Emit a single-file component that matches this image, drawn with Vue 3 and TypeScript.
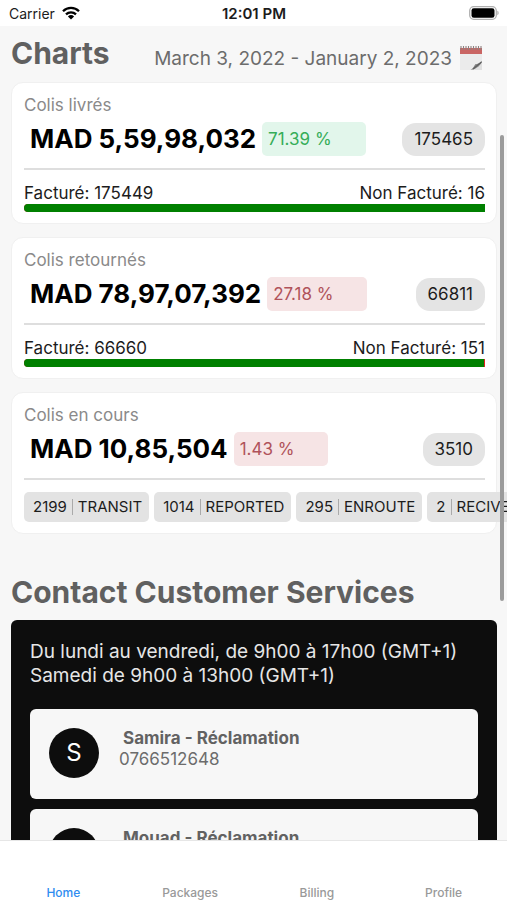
<script setup lang="ts">
import { ref } from 'vue'

interface Tag {
  count: number
  name: string
}

interface Summary {
  title: string
  amount: string
  rate: string
  trend: 'up' | 'down'
  total: number
  billed?: number
  unbilled?: number
  tags?: Tag[]
}

interface Contact {
  name: string
  phone: string
}

const summaries: Summary[] = [
  { title: 'Colis livrés', amount: 'MAD 5,59,98,032', rate: '71.39 %', trend: 'up', total: 175465, billed: 175449, unbilled: 16 },
  { title: 'Colis retournés', amount: 'MAD 78,97,07,392', rate: '27.18 %', trend: 'down', total: 66811, billed: 66660, unbilled: 151 },
  {
    title: 'Colis en cours',
    amount: 'MAD 10,85,504',
    rate: '1.43 %',
    trend: 'down',
    total: 3510,
    tags: [
      { count: 2199, name: 'TRANSIT' },
      { count: 1014, name: 'REPORTED' },
      { count: 295, name: 'ENROUTE' },
      { count: 2, name: 'RECIVED' },
    ],
  },
]

const contacts: Contact[] = [
  { name: 'Samira - Réclamation', phone: '0766512648' },
  { name: 'Mouad - Réclamation', phone: '' },
]

const tabs = ['Home', 'Packages', 'Billing', 'Profile']
const activeTab = ref('Home')

const billedShare = (s: Summary): string => `${((s.billed ?? 0) / s.total) * 100}%`
</script>

<template>
  <div class="screen">
    <header class="status">
      <div class="carrier">
        <span>Carrier</span>
        <svg width="18" height="14" viewBox="0 0 18 14" aria-hidden="true">
          <g fill="none" stroke="#000" stroke-width="2.3">
            <path d="M1 5.2a11.4 11.4 0 0 1 16 0" />
            <path d="M4 8.3a7.2 7.2 0 0 1 10 0" />
          </g>
          <path d="M9 13.6 5.9 10.4a4.5 4.5 0 0 1 6.2 0z" />
        </svg>
      </div>
      <time class="clock">12:01 PM</time>
      <div class="battery">
        <svg width="30" height="14" viewBox="0 0 30 14" aria-hidden="true">
          <rect x=".7" y=".7" width="26.6" height="12.6" rx="4" fill="#fff" stroke="#b0b0b0" stroke-width="1.3" />
          <rect x="2.5" y="2.3" width="23" height="9.4" rx="2.3" />
          <path d="M28.4 4.8c1.6.6 1.6 3.8 0 4.4z" fill="#a8a8a8" />
        </svg>
      </div>
    </header>

    <main class="content">
      <div class="heading">
        <h1>Charts</h1>
        <button class="range" type="button">
          <span>March 3, 2022 - January 2, 2023</span>
          <svg width="24" height="26" viewBox="0 0 24 26" aria-hidden="true">
            <path d="M1 4h22v21H1z" fill="#ebebeb" />
            <path d="M1 3h22v6H1z" fill="#c96563" />
            <path d="M2 1v4M4.5 1v4M7 1v4M9.5 1v4M12 1v4M14.5 1v4M17 1v4M19.5 1v4M22 1v4" stroke="#8f8080" stroke-width="1.1" />
            <path d="M12 25 23 17v8z" fill="#e0e0e0" />
            <path d="M11.500 25c2-1.200 3.500-3.200 4.700-5.800 2.400 0 4.900-1.200 6.800-3.400-.6 3.800-4.700 8.200-11.500 9.200z" fill="#858585" />
            <path d="M14 24 22.500 17" stroke="#5e5e5e" stroke-width="1.200" />
          </svg>
        </button>
      </div>

      <section class="cards">
        <article v-for="s in summaries" :key="s.title" class="card">
          <h2 class="title">{{ s.title }}</h2>
          <div class="figures">
            <strong class="amount">{{ s.amount }}</strong>
            <span class="rate" :class="s.trend">{{ s.rate }}</span>
            <span class="total">{{ s.total }}</span>
          </div>
          <hr />
          <template v-if="s.billed !== undefined">
            <div class="split">
              <span>Facturé: {{ s.billed }}</span>
              <span>Non Facturé: {{ s.unbilled }}</span>
            </div>
            <div class="bar">
              <div class="fill" :style="{ width: billedShare(s) }"></div>
            </div>
          </template>
          <ul v-else class="tags">
            <li v-for="t in s.tags" :key="t.name" class="tag">
              <span>{{ t.count }}</span>
              <span class="name">{{ t.name }}</span>
            </li>
          </ul>
        </article>
      </section>

      <h2 class="section-title">Contact Customer Services</h2>
      <section class="support">
        <p>Du lundi au vendredi, de 9h00 à 17h00 (GMT+1)<br />Samedi de 9h00 à 13h00 (GMT+1)</p>
        <article v-for="c in contacts" :key="c.name" class="contact">
          <span class="avatar">{{ c.name[0] }}</span>
          <div class="details">
            <h3>{{ c.name }}</h3>
            <span>{{ c.phone }}</span>
          </div>
        </article>
      </section>
      <div class="scrollbar"></div>
    </main>

    <nav class="tabbar">
      <button
        v-for="t in tabs"
        :key="t"
        type="button"
        :class="{ active: t === activeTab }"
        @click="activeTab = t"
      >
        {{ t }}
      </button>
    </nav>
  </div>
</template>

<style>
body {
  margin: 0;
}
</style>

<style scoped>
.screen {
  display: flex;
  flex-direction: column;
  height: 100vh;
  background: #f7f7f7;
  color: #1c1c1c;
  font-family: Inter, 'Liberation Sans', sans-serif;
}

h1,
h2,
h3,
p,
ul {
  margin: 0;
  padding: 0;
}

button {
  border: 0;
  background: none;
  padding: 0;
  font-family: inherit;
}

.status {
  display: grid;
  grid-template-columns: 1fr auto 1fr;
  align-items: center;
  height: 26px;
  flex: none;
  padding: 0 8px 0 9px;
  background: #fff;
  font-size: 14px;
}

.carrier {
  display: flex;
  align-items: center;
  gap: 7px;
}

.clock {
  font-size: 15px;
  font-weight: 600;
}

.battery {
  display: flex;
  justify-content: flex-end;
}

.content {
  position: relative;
  flex: 1;
  min-height: 0;
  overflow: hidden;
  padding: 0 10px 0 11px;
}

.heading {
  display: flex;
  box-sizing: border-box;
  align-items: center;
  justify-content: space-between;
  height: 56px;
  padding: 0 14px 2px 0;
}

h1,
.section-title {
  color: #606060;
  font-size: 30px;
  line-height: 40px;
  font-weight: 700;
}

.range {
  display: flex;
  align-items: center;
  gap: 7px;
  padding-top: 10px;
  color: #6c6c6c;
  font-size: 19px;
}

.cards {
  display: flex;
  flex-direction: column;
  gap: 13px;
}

.card {
  box-sizing: border-box;
  padding: 11px 11px 11px 12px;
  border: 1px solid #f0f0f0;
  border-radius: 12px;
  background: #fff;
}

.title {
  color: #8a8a8a;
  font-size: 17px;
  line-height: 22px;
  font-weight: 400;
}

.figures {
  display: flex;
  align-items: center;
  margin-top: 6px;
  padding-left: 6px;
}

.amount {
  color: #000;
  font-size: 26px;
  line-height: 34px;
  font-weight: 700;
}

.rate {
  margin-left: 6px;
  padding: 0 34px 0 6px;
  border-radius: 5px;
  font-size: 17px;
  line-height: 34px;
}

.up {
  background: #e2f6eb;
  color: #35ad58;
}

.down {
  background: #f6e4e5;
  color: #b0525a;
}

.total {
  margin-left: auto;
  padding: 0 12px;
  border-radius: 14px;
  background: #e4e4e4;
  font-size: 17px;
  line-height: 33px;
}

hr {
  height: 2px;
  margin: 12px 0;
  border: 0;
  background: #dedede;
}

.split {
  display: flex;
  justify-content: space-between;
  font-size: 17px;
  line-height: 22px;
}

.bar {
  height: 8px;
  overflow: hidden;
  border-radius: 4px 0 0 4px;
  background: #e02020;
}

.fill {
  height: 100%;
  background: #008000;
}

.tags {
  display: flex;
  gap: 5px;
  width: max-content;
  list-style: none;
}

.tag {
  display: flex;
  align-items: center;
  padding: 0 7px 0 9px;
  border-radius: 5px;
  background: #e3e3e3;
  font-size: 15px;
  line-height: 30px;
}

.name {
  display: flex;
  align-items: center;
}

.name::before {
  content: '';
  width: 1px;
  height: 16px;
  margin: 0 5px;
  background: #aaa;
}

.section-title {
  margin: 38px 0 8px;
}

.support {
  display: flex;
  flex-direction: column;
  gap: 10px;
  padding: 20px 19px;
  border-radius: 6px;
  background: #0d0d0d;
}

.support p {
  margin-bottom: 11px;
  color: #e6e6e6;
  font-size: 19px;
  line-height: 24px;
}

.contact {
  display: flex;
  box-sizing: border-box;
  height: 90px;
  padding: 19px;
  gap: 20px;
  border-radius: 6px;
  background: #f7f7f7;
}

.avatar {
  width: 50px;
  height: 50px;
  border-radius: 50%;
  background: #0d0d0d;
  color: #fff;
  font-size: 24px;
  line-height: 50px;
  text-align: center;
}

.details {
  color: #6c6c6c;
  font-size: 17px;
  line-height: 21px;
}

.details h3 {
  padding-left: 4px;
  color: #626262;
  font-size: 17px;
  font-weight: 700;
}

.scrollbar {
  position: absolute;
  top: 109px;
  right: 3px;
  width: 4px;
  height: 466px;
  border-radius: 2px;
  background: #9b9b9b;
}

.tabbar {
  display: grid;
  grid-template-columns: repeat(4, 1fr);
  flex: none;
  height: 60px;
  box-sizing: border-box;
  border-top: 1px solid #e6e6e6;
  background: #fff;
}

.tabbar button {
  padding-top: 44px;
  color: #999;
  font-size: 12px;
  line-height: 15px;
  font-weight: 500;
}

.tabbar .active {
  color: #2f8cf0;
}
</style>
